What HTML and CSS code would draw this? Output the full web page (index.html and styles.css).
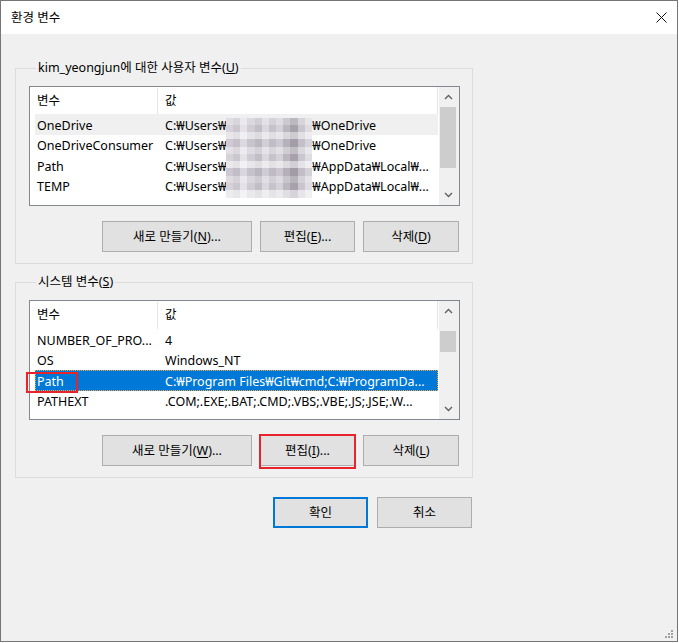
FILE: index.html
```html
<!DOCTYPE html>
<html lang="ko">
<head>
<meta charset="utf-8">
<title>환경 변수</title>
<link rel="stylesheet" href="styles.css">
</head>
<body>
<div class="window">
  <div class="titlebar">
    <span class="title">환경 변수</span>
    <svg class="close" width="11" height="11" viewBox="0 0 11 11"><path d="M0.5 0.5L10.5 10.5M10.5 0.5L0.5 10.5" stroke="#111" stroke-width="1" fill="none"/></svg>
  </div>
  <div class="content">
    <fieldset class="group">
      <legend>kim_yeongjun에 대한 사용자 변수(<u>U</u>)</legend>
      <div class="list">
        <div class="lv">
          <div class="lv-head"><span class="h1">변수</span><span class="h2">값</span></div>
          <div class="row sel-inactive"><span class="c1">OneDrive</span><span class="c2">C:₩Users₩<i class="hole"></i>₩OneDrive</span></div>
          <div class="row"><span class="c1">OneDriveConsumer</span><span class="c2">C:₩Users₩<i class="hole"></i>₩OneDrive</span></div>
          <div class="row"><span class="c1">Path</span><span class="c2">C:₩Users₩<i class="hole"></i>₩AppData₩Local₩...</span></div>
          <div class="row"><span class="c1">TEMP</span><span class="c2">C:₩Users₩<i class="hole"></i>₩AppData₩Local₩...</span></div>
          <div class="mosaic"></div>
        </div>
        <div class="sb">
          <div class="sb-btn"><svg width="9" height="6" viewBox="0 0 9 6"><path d="M1 5L4.5 1.5L8 5" stroke="#606060" stroke-width="1.4" fill="none"/></svg></div>
          <div class="sb-track"><div class="thumb thumb1"></div></div>
          <div class="sb-btn"><svg width="9" height="6" viewBox="0 0 9 6"><path d="M1 1L4.5 4.5L8 1" stroke="#606060" stroke-width="1.4" fill="none"/></svg></div>
        </div>
      </div>
      <div class="btnrow">
        <button class="btn w150">새로 만들기(<u>N</u>)...</button>
        <button class="btn w95">편집(<u>E</u>)...</button>
        <button class="btn w96">삭제(<u>D</u>)</button>
      </div>
    </fieldset>

    <fieldset class="group g2">
      <legend>시스템 변수(<u>S</u>)</legend>
      <div class="list">
        <div class="lv">
          <div class="lv-head"><span class="h1">변수</span><span class="h2">값</span></div>
          <div class="row"><span class="c1">NUMBER_OF_PRO...</span><span class="c2">4</span></div>
          <div class="row"><span class="c1">OS</span><span class="c2">Windows_NT</span></div>
          <div class="row sel"><span class="c1">Path</span><span class="c2">C:₩Program Files₩Git₩cmd;C:₩ProgramDa...</span></div>
          <div class="row"><span class="c1">PATHEXT</span><span class="c2">.COM;.EXE;.BAT;.CMD;.VBS;.VBE;.JS;.JSE;.W...</span></div>
        </div>
        <div class="sb">
          <div class="sb-btn"><svg width="9" height="6" viewBox="0 0 9 6"><path d="M1 5L4.5 1.5L8 5" stroke="#606060" stroke-width="1.4" fill="none"/></svg></div>
          <div class="sb-track"><div class="thumb thumb2"></div></div>
          <div class="sb-btn"><svg width="9" height="6" viewBox="0 0 9 6"><path d="M1 1L4.5 4.5L8 1" stroke="#606060" stroke-width="1.4" fill="none"/></svg></div>
        </div>
        <span class="mark mark-path"></span>
      </div>
      <div class="btnrow">
        <button class="btn w150">새로 만들기(<u>W</u>)...</button>
        <span class="btnwrap"><button class="btn w95">편집(<u>I</u>)...</button><span class="mark mark-btn"></span></span>
        <button class="btn w96">삭제(<u>L</u>)</button>
      </div>
    </fieldset>

    <div class="dlgrow">
      <button class="btn w95 default">확인</button>
      <button class="btn w95">취소</button>
    </div>
  </div>
  <svg class="grip" width="10" height="10" viewBox="0 0 10 10">
    <rect x="7" y="1" width="2" height="2" fill="#a0a0a0"/>
    <rect x="4" y="4" width="2" height="2" fill="#a0a0a0"/>
    <rect x="7" y="4" width="2" height="2" fill="#a0a0a0"/>
    <rect x="1" y="7" width="2" height="2" fill="#a0a0a0"/>
    <rect x="4" y="7" width="2" height="2" fill="#a0a0a0"/>
    <rect x="7" y="7" width="2" height="2" fill="#a0a0a0"/>
  </svg>
</div>
</body>
</html>
```

FILE: styles.css
```css
* { box-sizing: border-box; }
html, body { margin: 0; padding: 0; background: #ffffff; }
body {
  font-family: "Noto Sans", "Noto Sans CJK KR", sans-serif;
  font-size: 12.5px;
  color: #000;
}
.window {
  position: relative;
  width: 678px;
  height: 642px;
  border: 1px solid #767676;
  background: #f0f0f0;
}
.titlebar {
  height: 33px;
  background: #ffffff;
  display: flex;
  align-items: center;
  justify-content: space-between;
  padding: 0 10px 0 10px;
}
.title { font-size: 12.5px; line-height: 16px; }
.close { display: block; }
.content { padding-left: 14px; }

.group {
  width: 458px;
  margin: 26px 0 0 0;
  padding: 0 12px 11px 13px;
  border: 1px solid #dcdcdc;
  min-width: 0;
}
.group.g2 { margin-top: 10px; }
.group legend {
  margin-left: 7px;
  padding: 0 2px;
  line-height: 16px;
  height: 16px;
  color: #000;
}
.list {
  position: relative;
  margin-top: 10px;
  width: 431px;
  height: 120px;
  border: 1px solid #828790;
  background: #fff;
  display: flex;
}
.lv {
  position: relative;
  width: 409px;
  overflow: hidden;
}
.lv-head {
  height: 27px;
  display: flex;
  align-items: stretch;
  width: 408px;
  padding-top: 1px;
  border-right: 1px solid #e5e5e5;
}
.g2 .lv-head { height: 28px; }
.lv-head span { line-height: 26px; }
.h1 {
  width: 128px;
  padding-left: 7px;
  border-right: 1px solid #e5e5e5;
}
.h2 { padding-left: 7px; }
.row {
  margin-left: 5px;
  width: 403px;
  height: 20.67px;
  padding-top: 1.5px;
  line-height: 19px;
  display: flex;
  white-space: nowrap;
  overflow: hidden;
}
.c1 { width: 130px; padding-left: 2px; overflow: hidden; }
.c2 { flex: 1; overflow: hidden; }
.hole { display: inline-block; width: 86px; height: 1px; }
.sel-inactive { background: #f0f0f0; }
.sel {
  background: #0078d7;
  color: #fff;
  outline: 1px dotted #f2a64a;
  outline-offset: -1px;
}
.mosaic {
  position: absolute;
  left: 196px;
  top: 31px;
  width: 86px;
  height: 80px;
  background:
    linear-gradient(180deg,
      rgba(255,255,255,0.25) 0 7px, rgba(0,0,0,0) 7px 14px,
      rgba(255,255,255,0.45) 14px 21px, rgba(120,110,130,0.08) 21px 29px,
      rgba(255,255,255,0.3) 29px 36px, rgba(0,0,0,0) 36px 43px,
      rgba(255,255,255,0.5) 43px 50px, rgba(120,110,130,0.1) 50px 58px,
      rgba(255,255,255,0.2) 58px 65px, rgba(0,0,0,0) 65px 72px,
      rgba(255,255,255,0.55) 72px 80px),
    linear-gradient(90deg,
      #d6d2da 0 7px, #cbc7cf 7px 14px, #e4e2e7 14px 21px, #cfccd3 21px 29px,
      #c2bec7 29px 36px, #dad7de 36px 43px, #c7c3cb 43px 50px, #d4d1d8 50px 57px,
      #bbb7c0 57px 64px, #a6a1ab 64px 72px, #cac6ce 72px 79px, #dedce2 79px 86px);
}
.sb {
  width: 20px;
  background: #f0f0f0;
  display: flex;
  flex-direction: column;
}
.sb-btn {
  height: 20px;
  display: flex;
  align-items: center;
  justify-content: center;
  padding-right: 2px;
}
.sb-btn svg { display: block; }
.sb-track { flex: 1; }
.thumb {
  margin-left: 1px;
  width: 16px;
  background: #cdcdcd;
}
.thumb1 { height: 61px; }
.thumb2 { margin-top: 10px; height: 21px; }

.btnrow {
  margin-top: 15px;
  width: 430px;
  display: flex;
  justify-content: flex-end;
  gap: 8px;
}
.btn {
  height: 31px;
  font-family: inherit;
  font-size: 12.5px;
  color: #000;
  background: #e1e1e1;
  border: 1px solid #adadad;
  padding: 0;
  margin: 0;
  line-height: 16px;
}
.btn u { text-underline-offset: 2px; }
.w150 { width: 150px; }
.w95 { width: 95px; }
.w96 { width: 96px; }
.default { border: 2px solid #0078d7; }
.btnwrap { position: relative; display: block; }
.btnwrap .btn { display: block; }
.mark {
  position: absolute;
  border: 2px solid #e8232b;
  pointer-events: none;
}
.mark-btn { left: -1px; top: -1px; width: 97px; height: 35px; }
.mark-path { left: -4px; top: 71px; width: 52px; height: 21px; }

.dlgrow {
  margin-top: 19px;
  width: 457px;
  display: flex;
  justify-content: flex-end;
  gap: 9px;
}
.grip {
  position: absolute;
  right: 3px;
  bottom: 2px;
}
```
